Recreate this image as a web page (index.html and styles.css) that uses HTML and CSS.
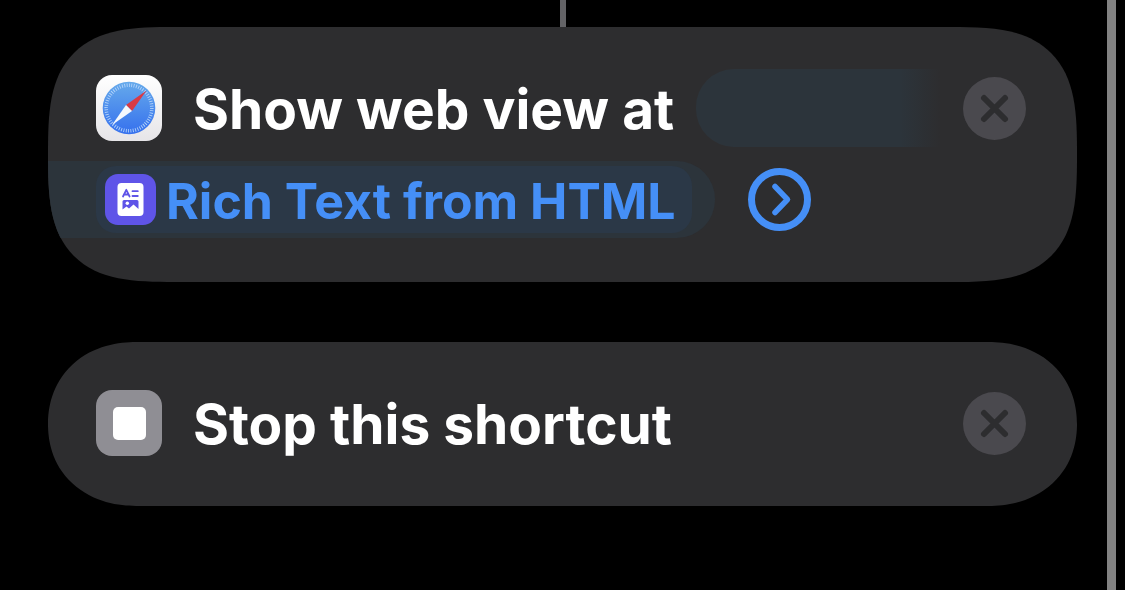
FILE: index.html
```html
<!DOCTYPE html>
<html lang="en">
<head>
    <meta charset="UTF-8">
    <meta name="viewport" content="width=device-width, initial-scale=1.0">
    <title>Shortcut</title>
    <link rel="stylesheet" href="styles.css">
</head>
<body>
    <main class="actions">
        <div class="connector"></div>

        <section class="card">
            <div class="row">
                <svg class="icon" viewBox="0 0 66 66" aria-hidden="true">
                    <defs>
                        <linearGradient id="plate" x1="0" y1="0" x2="0" y2="1">
                            <stop offset="0" stop-color="#ffffff"/>
                            <stop offset="1" stop-color="#e6e5e8"/>
                        </linearGradient>
                        <linearGradient id="dial" x1="0" y1="0" x2="0" y2="1">
                            <stop offset="0" stop-color="#66aaeb"/>
                            <stop offset="1" stop-color="#3570ee"/>
                        </linearGradient>
                    </defs>
                    <rect width="66" height="66" rx="16" fill="url(#plate)"/>
                    <circle cx="33" cy="33" r="26.3" fill="url(#dial)"/>
                    <circle cx="33" cy="33" r="22.8" fill="none" stroke="#b4d4fa" stroke-width="3.6" pathLength="60" stroke-dasharray="0.36 0.64"/>
                    <path d="M50.5 15.5L36 36L30 30Z" fill="#d83a45"/>
                    <path d="M16 50L30 30L36 36Z" fill="#f4f8fd"/>
                </svg>
                <h2>Show web view at</h2>
                <div class="field-start"></div>
                <button class="remove" type="button" aria-label="Remove action">
                    <svg viewBox="0 0 63 63"><path d="M21 21L42 42M42 21L21 42"/></svg>
                </button>
            </div>
            <div class="row-value">
                <div class="field-end">
                    <button class="token" type="button">
                        <svg class="token-icon" viewBox="0 0 51 51" aria-hidden="true">
                            <rect width="51" height="51" rx="13" fill="#5f54e8"/>
                            <rect x="12.5" y="9" width="26" height="33" rx="4" fill="#ffffff"/>
                            <path d="M18 22.5L21.3 15.8L24.6 22.5M19.2 20.5H23.4M27.5 17.2H32.8M27.5 22H32.8" fill="none" stroke="#5f54e8" stroke-width="1.8" stroke-linecap="round" stroke-linejoin="round"/>
                            <path d="M19 26H32Q33.5 26 33.5 27.5V35L28.5 30.5L24 34.5L21.5 32.5L17.5 35.5V27.5Q17.5 26 19 26Z" fill="#5f54e8"/>
                            <circle cx="22.3" cy="29.3" r="1.7" fill="#ffffff"/>
                        </svg>
                        <span>Rich Text from HTML</span>
                    </button>
                </div>
                <button class="expand" type="button" aria-label="Show more">
                    <svg viewBox="0 0 63 63">
                        <circle cx="31.5" cy="31.5" r="28" stroke-width="7"/>
                        <path d="M27 18.5L39.5 31.5L27 44.5" stroke-width="5.5"/>
                    </svg>
                </button>
            </div>
        </section>

        <section class="card card-single">
            <div class="row">
                <svg class="icon" viewBox="0 0 66 66" aria-hidden="true">
                    <rect width="66" height="66" rx="16" fill="#8f8e94"/>
                    <rect x="17" y="17" width="33" height="33" rx="5" fill="#ffffff"/>
                </svg>
                <h2>Stop this shortcut</h2>
                <button class="remove" type="button" aria-label="Remove action">
                    <svg viewBox="0 0 63 63"><path d="M21 21L42 42M42 21L21 42"/></svg>
                </button>
            </div>
        </section>
    </main>
    <div class="scrollbar"></div>
</body>
</html>
```
FILE: styles.css
```css
* {
    box-sizing: border-box;
}
body {
    display: flex;
    min-height: 100vh;
    margin: 0;
    background: #000;
    color: #fff;
    font-family: Inter, "Liberation Sans", sans-serif;
    font-weight: 700;
}
.actions {
    flex: 1;
    padding: 0 30px 0 48px;
}
.connector {
    width: 6px;
    height: 27px;
    margin: 0 auto;
    background: #636366;
}
.card {
    display: flex;
    flex-direction: column;
    gap: 14px;
    margin-bottom: 60px;
    padding: 42px 0 44px;
    overflow: hidden;
    background: #2d2d2f;
    border-radius: 127px;
    corner-shape: superellipse(1.6);
}
.card-single {
    border-radius: 88px / 82px;
    corner-shape: superellipse(1.1);
}
.row {
    display: flex;
    align-items: center;
    height: 78px;
    padding: 0 51px 0 48px;
}
.icon {
    flex: none;
    width: 66px;
    height: 66px;
}
h2 {
    margin: 0 22px 0 31px;
    padding-top: 2px;
    font-size: 55px;
    font-weight: 700;
    line-height: 66px;
    white-space: nowrap;
}
button {
    padding: 0;
    border: 0;
    background: none;
    color: inherit;
    font: inherit;
    cursor: pointer;
}
.field-start {
    flex: 1;
    height: 78px;
    margin-right: 18px;
    border-radius: 38px 0 0 38px;
    background: linear-gradient(to right, #2c343b 82%, #2d2d2f 98%);
}
.remove,
.expand {
    flex: none;
    width: 63px;
    height: 63px;
    border-radius: 50%;
}
.remove {
    margin-left: auto;
    background: #4a494e;
}
.remove svg,
.expand svg {
    display: block;
    fill: none;
    stroke-linecap: round;
    stroke-linejoin: round;
}
.remove svg {
    stroke: #2d2d2f;
    stroke-width: 6px;
}
.expand svg {
    stroke: #458ff7;
}
.row-value {
    display: flex;
    align-items: center;
    gap: 33px;
}
.field-end {
    padding: 5px 23px 5px 48px;
    border-radius: 0 38px 38px 0;
    background: #2c343b;
}
.token {
    display: flex;
    align-items: center;
    gap: 10px;
    height: 67px;
    padding: 0 16px 0 9px;
    border-radius: 20px;
    background: #2b3847;
    color: #458ff7;
    font-size: 50px;
    line-height: 66px;
    white-space: nowrap;
}
.token span {
    padding-top: 2px;
}
.token-icon {
    flex: none;
    width: 51px;
    height: 51px;
}
.scrollbar {
    width: 9px;
    margin-right: 9px;
    background: #828282;
}
```
